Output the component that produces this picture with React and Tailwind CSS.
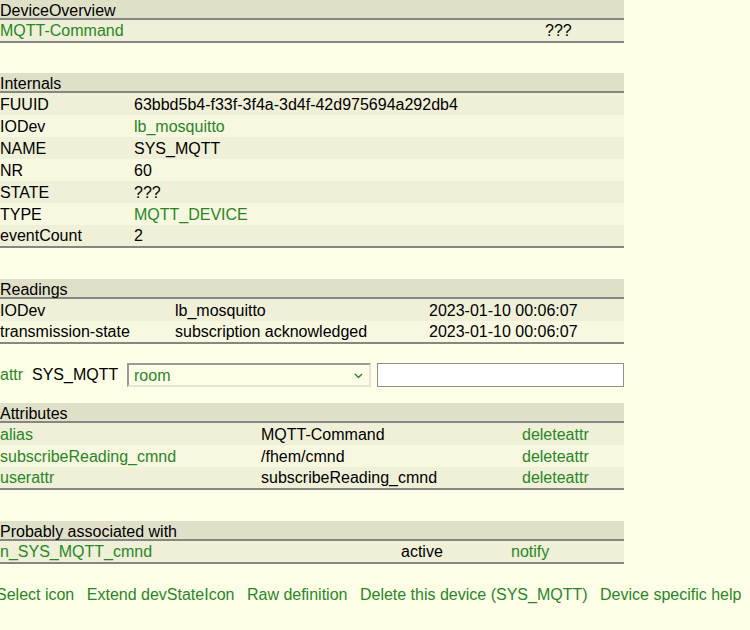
import React from "react";

const G = "text-[#278727]";

function Header({ title }) {
  return (
    <div className="h-[20px] bg-[#E0E0C8] border-b-2 border-[#868682]">
      <div className="h-[18px] leading-[20px] whitespace-nowrap translate-y-[1px]">{title}</div>
    </div>
  );
}

function Row({ cols, widths, idx, last }) {
  const bg = idx % 2 === 0 ? "bg-[#F0F0D8]" : "bg-[#F8F8E0]";
  return (
    <div className={`${bg} flex items-center ${last ? "h-[23px] pb-[1px] border-b-2 border-[#868682]" : "h-[22px]"}`}>
      {cols.map((c, i) => (
        <div
          key={i}
          className={`whitespace-nowrap translate-y-[1px] ${c.link ? G : "text-black"}`}
          style={{ width: widths[i] }}
        >
          {c.t}
        </div>
      ))}
    </div>
  );
}

function Table({ title, widths, rows, className = "" }) {
  return (
    <div className={`w-[624px] ${className}`}>
      <Header title={title} />
      {rows.map((r, i) => (
        <Row key={i} cols={r} widths={widths} idx={i} last={i === rows.length - 1} />
      ))}
    </div>
  );
}

export default function App() {
  return (
    <div
      className="w-[750px] h-[630px] bg-[#FFFFE7] text-[16px] text-black overflow-hidden"
      style={{ fontFamily: '"Liberation Sans", Arial, sans-serif' }}
    >
      <Table
        title="DeviceOverview"
        widths={[545, 79]}
        rows={[[{ t: "MQTT-Command", link: true }, { t: "???" }]]}
      />
      <Table
        className="mt-[30px]"
        title="Internals"
        widths={[134, 490]}
        rows={[
          [{ t: "FUUID" }, { t: "63bbd5b4-f33f-3f4a-3d4f-42d975694a292db4" }],
          [{ t: "IODev" }, { t: "lb_mosquitto", link: true }],
          [{ t: "NAME" }, { t: "SYS_MQTT" }],
          [{ t: "NR" }, { t: "60" }],
          [{ t: "STATE" }, { t: "???" }],
          [{ t: "TYPE" }, { t: "MQTT_DEVICE", link: true }],
          [{ t: "eventCount" }, { t: "2" }],
        ]}
      />
      <Table
        className="mt-[31px]"
        title="Readings"
        widths={[175, 254, 195]}
        rows={[
          [{ t: "IODev" }, { t: "lb_mosquitto" }, { t: "2023-01-10 00:06:07" }],
          [{ t: "transmission-state" }, { t: "subscription acknowledged" }, { t: "2023-01-10 00:06:07" }],
        ]}
      />
      <div className="mt-[19px] w-[624px] h-[24px] flex items-center">
        <span className={`${G} w-[32px]`}>attr</span>
        <span className="w-[95px]">SYS_MQTT</span>
        <div className="w-[244px] h-[24px] border-2 border-t-[#9a9a9a] border-l-[#9a9a9a] border-r-[#e6e6d8] border-b-[#e6e6d8] bg-[#FFFFE7] flex items-center pl-[5px] pr-[6px]">
          <span className={`${G} flex-1 leading-[20px] pt-[2px]`}>room</span>
          <svg width="9" height="6" viewBox="0 0 9 6" className="mt-[2px]">
            <path d="M1 1 L4.5 4.5 L8 1" fill="none" stroke="#278727" strokeWidth="1.4" />
          </svg>
        </div>
        <div className="ml-[6px] flex-1 h-[24px] bg-white border border-[#8f8f8f]" />
      </div>
      <Table
        className="mt-[16px]"
        title="Attributes"
        widths={[261, 261, 102]}
        rows={[
          [{ t: "alias", link: true }, { t: "MQTT-Command" }, { t: "deleteattr", link: true }],
          [{ t: "subscribeReading_cmnd", link: true }, { t: "/fhem/cmnd" }, { t: "deleteattr", link: true }],
          [{ t: "userattr", link: true }, { t: "subscribeReading_cmnd" }, { t: "deleteattr", link: true }],
        ]}
      />
      <Table
        className="mt-[31px]"
        title="Probably associated with"
        widths={[401, 110, 113]}
        rows={[[{ t: "n_SYS_MQTT_cmnd", link: true }, { t: "active" }, { t: "notify", link: true }]]}
      />
      <div className={`mt-[20px] h-[22px] flex items-center gap-[12.5px] whitespace-nowrap ${G} -ml-[4px]`}>
        <span>Select icon</span>
        <span>Extend devStateIcon</span>
        <span>Raw definition</span>
        <span>Delete this device (SYS_MQTT)</span>
        <span>Device specific help</span>
      </div>
    </div>
  );
}
